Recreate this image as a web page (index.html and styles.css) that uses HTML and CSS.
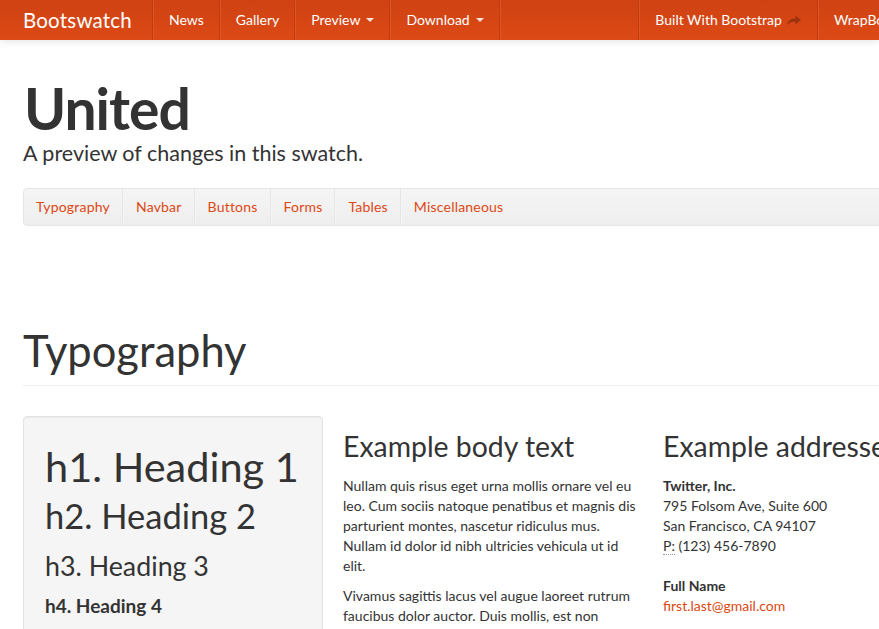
FILE: index.html
```html
<!DOCTYPE html>
<html lang="en">
<head>
<meta charset="utf-8">
<title>Bootswatch: United</title>
<link rel="stylesheet" href="styles.css">
</head>
<body>
<div class="navbar">
  <div class="container nav-inner">
    <a class="brand" href="#">Bootswatch</a>
    <ul class="nav">
      <li class="divider"></li>
      <li><a href="#">News</a></li>
      <li class="divider"></li>
      <li><a href="#">Gallery</a></li>
      <li class="divider"></li>
      <li><a href="#">Preview <span class="caret"></span></a></li>
      <li class="divider"></li>
      <li><a href="#">Download <span class="caret"></span></a></li>
      <li class="divider"></li>
    </ul>
    <ul class="nav nav-right">
      <li class="divider"></li>
      <li><a href="#">Built With Bootstrap <svg class="share" width="16" height="12" viewBox="0 0 16 12"><path d="M1 11 C2 6 5 4.5 9.5 4.5 V1.5 L15 6 L9.5 10.5 V7.5 C6 7.5 3 8.5 1 11 Z"/></svg></a></li>
      <li class="divider"></li>
      <li><a href="#">WrapBootstrap <svg class="share" width="16" height="12" viewBox="0 0 16 12"><path d="M1 11 C2 6 5 4.5 9.5 4.5 V1.5 L15 6 L9.5 10.5 V7.5 C6 7.5 3 8.5 1 11 Z"/></svg></a></li>
    </ul>
  </div>
</div>

<div class="container">
  <header class="subhead">
    <h1 class="title">United</h1>
    <p class="lead">A preview of changes in this swatch.</p>
    <div class="subnav">
      <ul>
        <li><a href="#">Typography</a></li>
        <li><a href="#">Navbar</a></li>
        <li><a href="#">Buttons</a></li>
        <li><a href="#">Forms</a></li>
        <li><a href="#">Tables</a></li>
        <li><a href="#">Miscellaneous</a></li>
      </ul>
    </div>
  </header>

  <section class="section">
    <div class="page-header">
      <h1>Typography</h1>
    </div>
    <div class="row">
      <div class="span4">
        <div class="well">
          <h1>h1. Heading 1</h1>
          <h2>h2. Heading 2</h2>
          <h3>h3. Heading 3</h3>
          <h4>h4. Heading 4</h4>
          <h5>h5. Heading 5</h5>
          <h6>h6. Heading 6</h6>
        </div>
      </div>
      <div class="span4">
        <h3>Example body text</h3>
        <p>Nullam quis risus eget urna mollis ornare vel eu leo. Cum sociis natoque penatibus et magnis dis parturient montes, nascetur ridiculus mus. Nullam id dolor id nibh ultricies vehicula ut id elit.</p>
        <p>Vivamus sagittis lacus vel augue laoreet rutrum faucibus dolor auctor. Duis mollis, est non commodo luctus, nisi erat porttitor ligula, eget lacinia odio sem nec elit.</p>
      </div>
      <div class="span4">
        <h3>Example addresses</h3>
        <address>
          <strong>Twitter, Inc.</strong><br>
          795 Folsom Ave, Suite 600<br>
          San Francisco, CA 94107<br>
          <abbr title="Phone">P:</abbr> (123) 456-7890
        </address>
        <address>
          <strong>Full Name</strong><br>
          <a href="#">first.last@gmail.com</a>
        </address>
      </div>
    </div>
  </section>
</div>
</body>
</html>
```
FILE: styles.css
```css
html, body {
  overflow: hidden;
}
body {
  margin: 0;
  font-family: Lato, "Open Sans", sans-serif;
  font-size: 14px;
  line-height: 20px;
  color: #333333;
  background: #ffffff;
}
a {
  color: #dd4814;
  text-decoration: none;
}
ul {
  list-style: none;
  margin: 0;
  padding: 0;
}
.container {
  width: 940px;
  margin-left: 23px;
}

/* navbar */
.navbar {
  height: 40px;
  background: linear-gradient(to bottom, #cf4213, #dc4915);
  box-shadow: 0 1px 8px rgba(0, 0, 0, 0.12);
  position: relative;
  z-index: 2;
}
.nav-inner {
  display: flex;
  height: 40px;
  align-items: stretch;
}
.brand {
  color: #ffffff;
  font-size: 20.5px;
  line-height: 40px;
  padding-right: 20px;
  letter-spacing: 0.2px;
  white-space: nowrap;
}
.nav {
  display: flex;
  align-items: stretch;
}
.nav-right {
  margin-left: auto;
}
.nav li a {
  display: flex;
  align-items: center;
  height: 40px;
  padding: 0 15px;
  color: #ffffff;
  font-size: 14px;
  white-space: nowrap;
}
.nav .divider {
  width: 1px;
  background: #bf3b10;
  border-right: 1px solid #e05522;
}
.caret {
  display: inline-block;
  width: 0;
  height: 0;
  margin-left: 6px;
  border-left: 4px solid transparent;
  border-right: 4px solid transparent;
  border-top: 4px solid #ffffff;
  opacity: 0.85;
}
.share {
  margin-left: 4px;
  fill: #8e2f0e;
  opacity: 0.8;
}

/* header */
.subhead {
  padding-top: 38px;
}
.title {
  margin: 0;
  padding-left: 1px;
  font-size: 57px;
  line-height: 60px;
  font-weight: 700;
  letter-spacing: -1px;
}
.lead {
  margin: 0;
  font-size: 21.5px;
  line-height: 30px;
  font-weight: 400;
}
.subnav {
  margin-top: 20px;
  height: 36px;
  background: linear-gradient(to bottom, #f5f5f5, #eeeeee);
  border: 1px solid #e5e5e5;
  border-radius: 4px;
}
.subnav ul {
  display: flex;
  height: 36px;
}
.subnav li a {
  display: flex;
  align-items: center;
  height: 36px;
  padding: 0 12px;
  border-left: 1px solid #f5f5f5;
  border-right: 1px solid #e5e5e5;
  font-size: 14px;
  letter-spacing: 0.2px;
  color: #dd4814;
}
.subnav li:first-child a {
  border-left: 0;
}
.subnav li:last-child a {
  border-right: 0;
}

/* section */
.section {
  padding-top: 104px;
}
.page-header {
  padding-bottom: 15px;
  border-bottom: 1px solid #eeeeee;
  margin-bottom: 30px;
}
.page-header h1 {
  margin: 0;
  font-size: 43.5px;
  line-height: 40px;
  font-weight: 400;
}
.row {
  display: grid;
  grid-template-columns: 300px 300px 300px;
  column-gap: 20px;
}
h1, h2, h3, h4, h5, h6 {
  color: #333333;
  font-weight: 400;
  margin: 10px 0;
}
.well {
  min-height: 20px;
  padding: 19px 19px 19px 21px;
  background: #f5f5f5;
  border: 1px solid #e3e3e3;
  border-radius: 4px;
  box-shadow: inset 0 1px 1px rgba(0, 0, 0, 0.05);
}
.well h1 { font-size: 41.5px; line-height: 40px; }
.well h2 { font-size: 34.5px; line-height: 40px; }
.well h3 { font-size: 26.8px; line-height: 40px; }
.well h4 { font-size: 19px; line-height: 20px; font-weight: 700; }
.well h5 { font-size: 15px; line-height: 20px; font-weight: 700; }
.well h6 { font-size: 13px; line-height: 20px; font-weight: 700; }
.span4 > h3 {
  font-size: 28.4px;
  line-height: 40px;
  white-space: nowrap;
}
p {
  margin: 0 0 10px;
}
address {
  font-style: normal;
  margin-bottom: 20px;
  line-height: 20px;
}
address strong {
  font-weight: 700;
}
abbr {
  text-decoration: none;
  border-bottom: 1px dotted #999999;
  cursor: help;
}
```
